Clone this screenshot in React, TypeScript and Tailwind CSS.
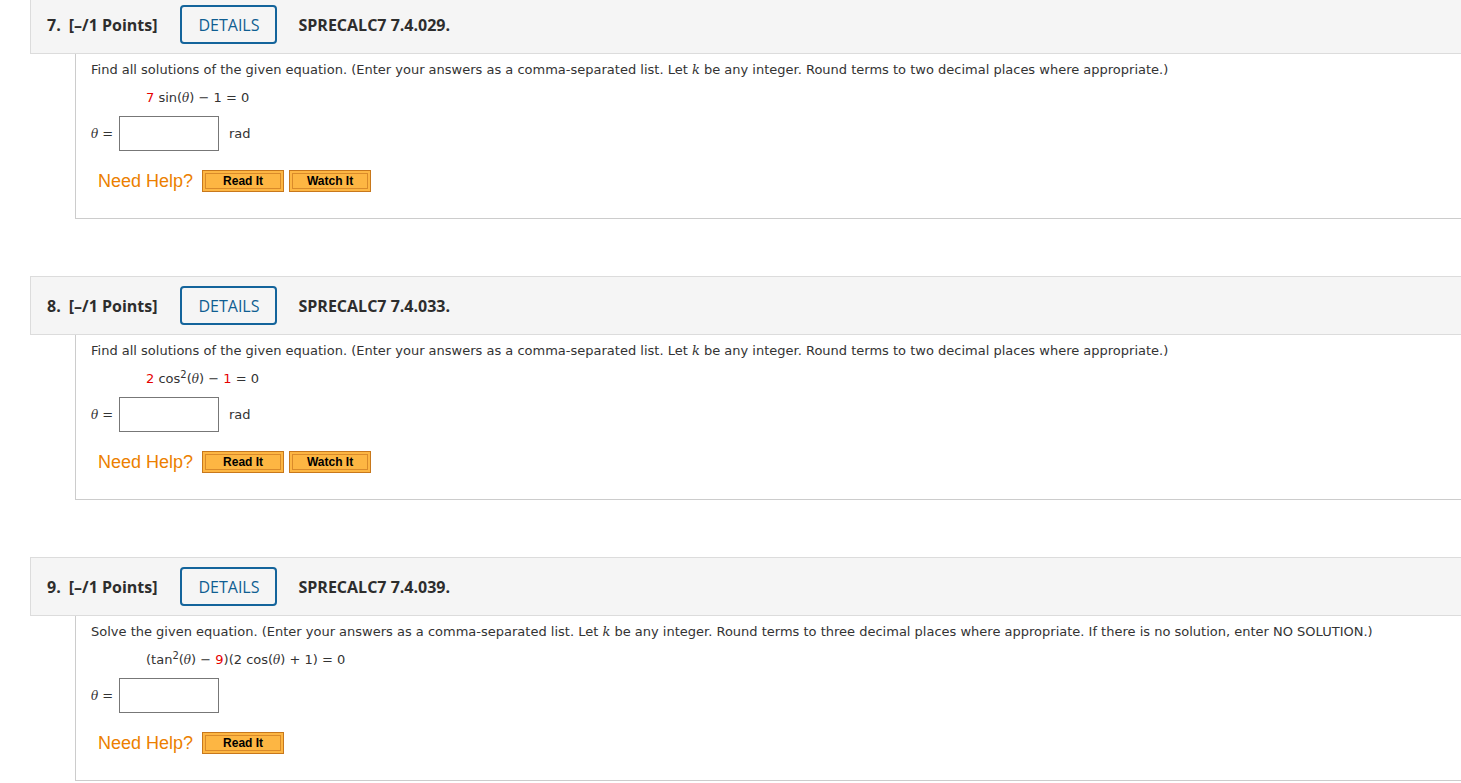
import React from "react";

type Q = {
  num: number;
  code: string;
  prompt: React.ReactNode;
  eq: React.ReactNode;
  unit?: string;
  watch: boolean;
};

const R = ({ children }: { children: React.ReactNode }) => <span className="text-[#e60000]">{children}</span>;
const Th = () => <i className="font-['DejaVu_Serif',serif] text-[12px]">θ</i>;
const Sup = () => <sup className="text-[10px]">2</sup>;

const k = <i className="font-['DejaVu_Serif',serif]">k</i>;

const questions: Q[] = [
  {
    num: 7,
    code: "SPRECALC7 7.4.029.",
    prompt: (
      <>
        Find all solutions of the given equation. (Enter your answers as a comma-separated list. Let {k} be any integer. Round terms to two decimal places where appropriate.)
      </>
    ),
    eq: (
      <>
        <R>7</R> sin(<Th />) − 1 = 0
      </>
    ),
    unit: "rad",
    watch: true,
  },
  {
    num: 8,
    code: "SPRECALC7 7.4.033.",
    prompt: (
      <>
        Find all solutions of the given equation. (Enter your answers as a comma-separated list. Let {k} be any integer. Round terms to two decimal places where appropriate.)
      </>
    ),
    eq: (
      <>
        <R>2</R> cos<Sup />(<Th />) − <R>1</R> = 0
      </>
    ),
    unit: "rad",
    watch: true,
  },
  {
    num: 9,
    code: "SPRECALC7 7.4.039.",
    prompt: (
      <>
        Solve the given equation. (Enter your answers as a comma-separated list. Let {k} be any integer. Round terms to three decimal places where appropriate. If there is no solution, enter NO SOLUTION.)
      </>
    ),
    eq: (
      <>
        (tan<Sup />(<Th />) − <R>9</R>)(2 cos(<Th />) + 1) = 0
      </>
    ),
    watch: false,
  },
];

const HelpBtn = ({ label }: { label: string }) => (
  <button className="h-[22px] w-[82px] border border-[#c8781c] bg-[#fdb643] shadow-[inset_0_0_0_2px_#fdb643,inset_0_0_0_3px_#d98a2a] font-['Liberation_Sans',Arial,sans-serif] text-[12px] font-bold text-black leading-none">
    {label}
  </button>
);

const Question = ({ q }: { q: Q }) => (
  <div className="mb-[57px]">
    <div className="flex h-[59px] items-center border border-[#dcdcdc] bg-[#f5f5f5] pl-[16px] font-['Open_Sans',sans-serif] text-[16px] font-bold text-[#2d2d2d]">
      <span>{q.num}.</span>
      <span className="ml-[8px]">[–/1 Points]</span>
      <span className="ml-[23px] flex h-[39px] w-[97px] items-center justify-center rounded-[4px] border-2 border-[#14649b] text-[16px] font-normal text-[#0f5e92]">
        DETAILS
      </span>
      <span className="ml-[21px]">{q.code}</span>
    </div>
    <div className="ml-[45px] border-b border-l border-[#cccccc] pl-[15px] pt-[8px] pb-[25px] font-['DejaVu_Sans',Verdana,sans-serif] text-[13px] text-[#333]">
      <div className="leading-[16px] whitespace-nowrap">{q.prompt}</div>
      <div className="mt-[10px] ml-[55px] leading-[20px] whitespace-nowrap">{q.eq}</div>
      <div className="mt-[8px] flex items-center">
        <span className="w-[28px] whitespace-nowrap">
          <Th /> =
        </span>
        <div className="h-[35px] w-[100px] border border-[#777] bg-white" />
        {q.unit && <span className="ml-[10px]">{q.unit}</span>}
      </div>
      <div className="mt-[18px] flex h-[24px] items-center">
        <span className="ml-[7px] mr-[9px] font-['Liberation_Sans',Arial,sans-serif] text-[18px] text-[#ec7f00]">Need Help?</span>
        <HelpBtn label="Read It" />
        {q.watch && (
          <span className="ml-[5px] flex">
            <HelpBtn label="Watch It" />
          </span>
        )}
      </div>
    </div>
  </div>
);

export default function App() {
  return (
    <div className="h-[783px] w-[1461px] overflow-hidden bg-white">
      <div className="ml-[30px] -mt-[5px] w-[1500px]">
        {questions.map((q) => (
          <Question key={q.num} q={q} />
        ))}
      </div>
    </div>
  );
}
